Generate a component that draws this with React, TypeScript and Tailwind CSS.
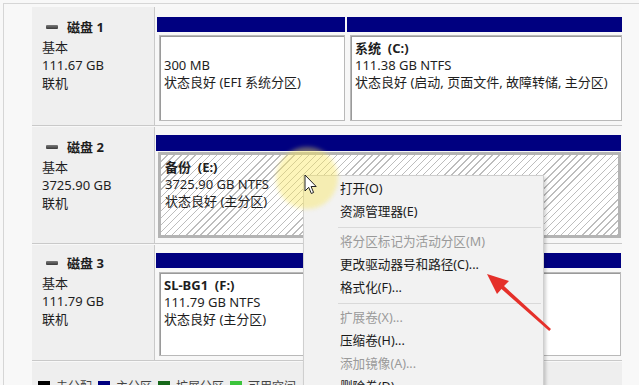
import React from 'react';

const font = "font-[family-name:'Noto_Sans','Noto_Sans_CJK_SC',sans-serif]";

type MenuEntry = { label: string; disabled?: boolean } | 'sep';

const menuItems: MenuEntry[] = [
  { label: '打开(O)' },
  { label: '资源管理器(E)' },
  'sep',
  { label: '将分区标记为活动分区(M)', disabled: true },
  { label: '更改驱动器号和路径(C)...' },
  { label: '格式化(F)...' },
  'sep',
  { label: '扩展卷(X)...', disabled: true },
  { label: '压缩卷(H)...' },
  { label: '添加镜像(A)...', disabled: true },
  { label: '删除卷(D)...' },
];

const legend = [
  { color: 'bg-black', label: '未分配', w: 'w-[60px]' },
  { color: 'bg-[#000080]', label: '主分区', w: 'w-[60px]' },
  { color: 'bg-[#16681a]', label: '扩展分区', w: 'w-[72px]' },
  { color: 'bg-[#3cc43c]', label: '可用空间', w: 'w-[76px]' },
];

const DiskLabel: React.FC<{ name: string; size: string; topPad: string }> = ({ name, size, topPad }) => (
  <div className={`w-[123px] shrink-0 bg-[#efefef] border-r border-b border-[#c9c9c9] pl-[10px] ${topPad} text-[13px] leading-[18px] text-[#1e1e1e]`}>
    <div className="flex items-center mb-[2px]">
      <div className="w-[12px] h-[4px] ml-[4px] mr-[9px] rounded-[1px] bg-gradient-to-b from-[#7a7a7a] to-[#3a3a3a]" />
      <span className="font-bold">{name}</span>
    </div>
    <div>基本</div>
    <div>{size}</div>
    <div>联机</div>
  </div>
);

const PartitionText: React.FC<{ title?: string; size: string; status: string }> = ({ title, size, status }) => (
  <div className="pl-[4px] pt-[4px] text-[13px] leading-[17px] text-[#1e1e1e] whitespace-nowrap">
    {title ? <div className="font-bold">{title}</div> : <div>&nbsp;</div>}
    <div>{size}</div>
    <div>{status}</div>
  </div>
);

const Cursor: React.FC = () => (
  <svg width="14" height="21" viewBox="0 0 14 21" className="absolute left-[304px] top-[174px]">
    <path d="M1 1 L1 17 L4.7 13.3 L7.3 19.5 L9.6 18.5 L7.1 12.5 L12.2 12.5 Z" fill="#fff" stroke="#222" strokeWidth="1" strokeLinejoin="round" />
  </svg>
);

export default function App() {
  return (
    <div className={`relative w-[639px] h-[385px] overflow-hidden bg-[#f8f8f8] ${font}`}>
      <div className="ml-[3px] mt-[3px] h-full border-l border-t border-[#d6d6d6] pl-[28px] pt-[3px]">
        <div className="flex flex-col w-[590px] gap-[1px]">
          {/* disk 1 */}
          <div className="flex h-[119px]">
            <DiskLabel name="磁盘 1" size="111.67 GB" topPad="pt-[11px]" />
            <div className="flex-1 flex gap-[2px] pl-[2px] pt-[10px] border-b border-[#c9c9c9] bg-[#f7f7f7]">
              <div className="w-[188px] flex flex-col">
                <div className="h-[15px] bg-[#000080]" />
                <div className="ml-[2px] mt-[3px] h-[86px] bg-white border border-[#b9b9b9] shadow-[inset_1px_1px_0_#9a9a9a]">
                  <PartitionText size="300 MB" status="状态良好 (EFI 系统分区)" />
                </div>
              </div>
              <div className="w-[275px] flex flex-col">
                <div className="h-[15px] bg-[#000080]" />
                <div className="ml-[3px] mt-[3px] h-[86px] bg-white border border-[#b9b9b9] shadow-[inset_1px_1px_0_#9a9a9a]">
                  <PartitionText title={'系统\u00a0\u00a0(C:)'} size="111.38 GB NTFS" status="状态良好 (启动, 页面文件, 故障转储, 主分区)" />
                </div>
              </div>
            </div>
          </div>

          {/* disk 2 */}
          <div className="flex h-[117px]">
            <DiskLabel name="磁盘 2" size="3725.90 GB" topPad="pt-[11px]" />
            <div className="flex-1 flex flex-col pl-[1px] pt-[8px] border-b border-[#c9c9c9] bg-[#f7f7f7]">
              <div className="w-[465px] h-[16px] bg-[#000080]" />
              <div className="ml-[2px] mt-[1px] w-[463px] h-[86px] border-[3px] border-[#b4b4b4] bg-white bg-[image:repeating-linear-gradient(135deg,#ffffff_0px,#ffffff_4px,#bdbdbd_4px,#bdbdbd_5px)]">
                <PartitionText title={'备份\u00a0\u00a0(E:)'} size="3725.90 GB NTFS" status="状态良好 (主分区)" />
              </div>
            </div>
          </div>

          {/* disk 3 */}
          <div className="flex h-[116px]">
            <DiskLabel name="磁盘 3" size="111.79 GB" topPad="pt-[9px]" />
            <div className="flex-1 flex flex-col pl-[1px] pt-[8px] border-b border-[#c9c9c9] bg-[#f7f7f7]">
              <div className="w-[465px] h-[15px] bg-[#000080]" />
              <div className="ml-[3px] mt-[4px] w-[462px] h-[84px] bg-white border border-[#b9b9b9] shadow-[inset_1px_1px_0_#9a9a9a]">
                <PartitionText title={'SL-BG1\u00a0\u00a0(F:)'} size="111.79 GB NTFS" status="状态良好 (主分区)" />
              </div>
            </div>
          </div>

          {/* legend */}
          <div className="h-[30px] bg-[#eeeeee] flex items-start pt-[18px] pl-[6px] text-[12px] leading-[14px] text-[#444]">
            {legend.map((l) => (
              <div key={l.label} className={`flex items-start ${l.w}`}>
                <div className={`w-[12px] h-[12px] mt-[1px] ${l.color}`} />
                <span className="ml-[6px]">{l.label}</span>
              </div>
            ))}
          </div>
        </div>
      </div>

      {/* context menu */}
      <div className="absolute left-[303px] top-[175px] w-[241px] bg-[#f2f2f2] border border-[#cfcfcf] shadow-[2px_2px_3px_rgba(0,0,0,0.18)] pt-[2px] pb-[4px]">
        {menuItems.map((m, i) =>
          m === 'sep' ? (
            <div key={i} className="h-[7px] flex items-center pl-[34px] pr-[2px]">
              <div className="w-full h-px bg-[#d9d9d9]" />
            </div>
          ) : (
            <div
              key={i}
              className={`h-[23px] flex items-center pl-[36px] text-[12.6px] ${m.disabled ? 'text-[#9a9a9a]' : 'text-[#1a1a1a]'}`}
            >
              {m.label}
            </div>
          )
        )}
      </div>

      {/* click highlight + cursor */}
      <div className="absolute left-[276px] top-[147px] w-[62px] h-[62px] rounded-full bg-[rgba(250,232,90,0.42)] blur-[2px]" />
      <Cursor />

      {/* red arrow */}
      <svg className="absolute left-0 top-0" width="639" height="385" viewBox="0 0 639 385">
        <polygon
          points="487,274 509,281 504,286 551,329 549.2,331 501.5,289 497,294"
          fill="#e5302a"
        />
      </svg>
    </div>
  );
}
